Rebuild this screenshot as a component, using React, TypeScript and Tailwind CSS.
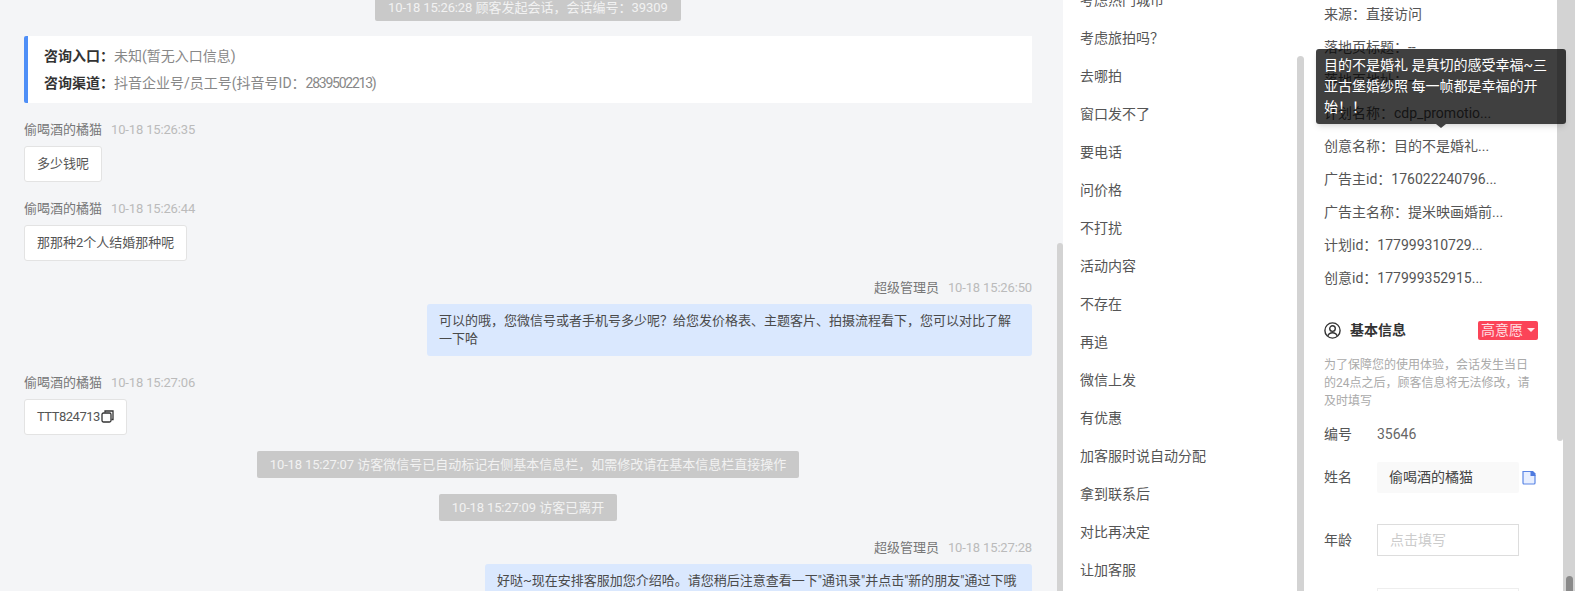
const consultList = [
  "考虑热门城市",
  "考虑旅拍吗？",
  "去哪拍",
  "窗口发不了",
  "要电话",
  "问价格",
  "不打扰",
  "活动内容",
  "不存在",
  "再追",
  "微信上发",
  "有优惠",
  "加客服时说自动分配",
  "拿到联系后",
  "对比再决定",
  "让加客服",
]

const adRows = [
  "来源：直接访问",
  "落地页标题：--",
  "落地页地址：--",
  "计划名称：cdp_promotio...",
  "创意名称：目的不是婚礼...",
  "广告主id：176022240796...",
  "广告主名称：提米映画婚前...",
  "计划id：177999310729...",
  "创意id：177999352915...",
]

const SystemNote = ({ time, text, className }: { time: string; text: string; className: string }) => (
  <div className={`flex justify-center ${className}`}>
    <div className="h-[27px] rounded-[2px] bg-[#c9c9c9] px-[13px] text-[13px] leading-[27px] text-[#f2f2f2]">
      <span className="tracking-[-0.15px]">{time}</span> {text}
    </div>
  </div>
)

const MetaLine = ({ name, time, right }: { name: string; time: string; right?: boolean }) => (
  <div className={`flex h-5 items-center gap-[9px] text-[13px] leading-5 ${right ? "justify-end" : ""}`}>
    <span className="text-[#777777]">{name}</span>
    <span className="tracking-[-0.15px] text-[#bbbbbb]">{time}</span>
  </div>
)

const GuestMessage = ({ name, time, children }: { name: string; time: string; children: React.ReactNode }) => (
  <div className="mt-[17px]">
    <MetaLine name={name} time={time} />
    <div className="mt-1.5 flex">
      <div className="flex h-9 items-center rounded-[3px] border border-[#e3e3e3] bg-white px-3 text-[13px] text-[#555555]">{children}</div>
    </div>
  </div>
)

const CopyIcon = () => (
  <svg width="13" height="13" viewBox="0 0 13 13" fill="none" stroke="#333333" strokeWidth="1.3" className="-mt-0.5 ml-px">
    <path d="M4 2.500V1h8v8.500h-1.500" />
    <rect x="1" y="3" width="9" height="9" rx="1.500" />
  </svg>
)

const FileCopyIcon = () => (
  <svg width="14" height="15" viewBox="0 0 14 15" className="shrink-0">
    <path d="M1 1.500h8l4 4v7.500a1 1 0 0 1-1 1H2a1 1 0 0 1-1-1z" fill="#e8efff" stroke="#5b86e5" strokeWidth="1.200" />
    <path d="M8.500 1h2.500l2.500 2.500v2.500h-5z" fill="#4f7be0" />
  </svg>
)

const ChatPanel = () => (
  <div className="w-[1057px] shrink-0 pl-6 pr-[25px]">
    <div className="-mt-1.5">
      <SystemNote time="10-18 15:26:28" text="顾客发起会话，会话编号：39309" className="" />
    </div>
    <div className="mt-[15px] flex h-[67px] flex-col justify-center rounded-l-[2px] border-l-4 border-[#4f8ff7] bg-white pl-4 text-[14px] leading-[27px]">
      <div>
        <span className="font-bold text-[#333333]">咨询入口：</span>
        <span className="text-[#888888]">未知(暂无入口信息)</span>
      </div>
      <div>
        <span className="font-bold text-[#333333]">咨询渠道：</span>
        <span className="text-[#888888]">
          抖音企业号/员工号(抖音号ID：<span className="tracking-[-1.25px]">2839502213</span>)
        </span>
      </div>
    </div>

    <GuestMessage name="偷喝酒的橘猫" time="10-18 15:26:35">多少钱呢</GuestMessage>
    <GuestMessage name="偷喝酒的橘猫" time="10-18 15:26:44">那那种2个人结婚那种呢</GuestMessage>

    <div className="mt-[17px]">
      <MetaLine name="超级管理员" time="10-18 15:26:50" right />
      <div className="mt-1.5 flex justify-end">
        <div className="w-[605px] rounded-[3px] bg-[#dae8fe] px-3 py-2 text-[13px] leading-[18px] text-[#4a4a4a]">
          可以的哦，您微信号或者手机号多少呢？给您发价格表、主题客片、拍摄流程看下，您可以对比了解一下哈
        </div>
      </div>
    </div>

    <GuestMessage name="偷喝酒的橘猫" time="10-18 15:27:06">
      <span className="tracking-[-0.5px]">TTT824713</span>
      <CopyIcon />
    </GuestMessage>

    <SystemNote time="10-18 15:27:07" text="访客微信号已自动标记右侧基本信息栏，如需修改请在基本信息栏直接操作" className="mt-4" />
    <SystemNote time="10-18 15:27:09" text="访客已离开" className="mt-4" />

    <div className="mt-[17px]">
      <MetaLine name="超级管理员" time="10-18 15:27:28" right />
      <div className="mt-1.5 flex justify-end">
        <div className="w-[547px] rounded-[3px] bg-[#dae8fe] px-3 py-2 text-[13px] leading-[18px] text-[#4a4a4a]">
          好哒~现在安排客服加您介绍哈。请您稍后注意查看一下"通讯录"并点击"新的朋友"通过下哦
        </div>
      </div>
    </div>
  </div>
)

const QuickReplies = () => (
  <div className="flex w-[241px] shrink-0">
    <div className="-mt-[19px] flex-1 pl-[17px] text-[14px] text-[#555555]">
      {consultList.map((item) => (
        <div key={item} className="flex h-[38px] items-center">{item}</div>
      ))}
    </div>
    <div className="mt-14 w-[7px] rounded-t-[4px] bg-[#d3d3d3]" />
  </div>
)

const ProfilePanel = () => (
  <div className="relative flex min-w-0 flex-1">
    <div className="w-[253px] shrink-0 pl-5 pr-[18px] text-[14px] text-[#555555]">
      <div className="-mt-0.5">
        {adRows.map((row) => (
          <div key={row} className="flex h-[33px] items-center whitespace-nowrap">{row}</div>
        ))}
      </div>

      <div className="mt-[25px] flex h-5 items-center">
        <svg width="17" height="17" viewBox="0 0 17 17" fill="none" stroke="#333333" strokeWidth="1.400">
          <circle cx="8.500" cy="8.500" r="7.600" />
          <circle cx="8.500" cy="6.600" r="2.800" />
          <path d="M3.800 14c.8-2.200 2.600-3.200 4.700-3.200s3.900 1 4.700 3.200" />
        </svg>
        <span className="ml-[9px] font-bold text-[#333333]">基本信息</span>
        <div className="ml-auto mr-px flex h-[19px] w-[60px] items-center justify-center gap-1 rounded-[2px] bg-[#fb4458] text-[#ffdfe2]">
          高意愿
          <span className="h-0 w-0 border-x-[4px] border-t-[4px] border-x-transparent border-t-[#ffe9eb]" />
        </div>
      </div>

      <p className="mt-4 w-[214px] text-[12px] leading-[18px] text-[#aaaaaa]">
        为了保障您的使用体验，会话发生当日的24点之后，顾客信息将无法修改，请及时填写
      </p>

      <div className="mt-[14px] flex h-5 items-center">
        <span className="w-[53px]">编号</span>
        <span className="text-[#666666]">35646</span>
      </div>

      <div className="mt-[18px] flex h-[31px] items-center">
        <span className="w-[53px] shrink-0">姓名</span>
        <div className="flex h-[31px] w-[142px] shrink-0 items-center rounded-[2px] bg-[#f9f9f9] px-3 text-[#444444]">偷喝酒的橘猫</div>
        <div className="ml-[3px]"><FileCopyIcon /></div>
      </div>

      <div className="mt-[31px] flex h-8 items-center">
        <span className="w-[53px] shrink-0">年龄</span>
        <div className="flex h-8 w-[142px] shrink-0 items-center border border-[#dddddd] px-3 text-[#cccccc]">点击填写</div>
      </div>

      <div className="mt-8 ml-[53px] h-8 w-[142px] border border-[#eeeeee]" />
    </div>
    <div className="h-[441px] w-1.5 shrink-0 rounded-b-[3px] bg-[#d3d3d3]" />
    <div className="flex flex-1 justify-center bg-[#d3d3d3]">
      <div className="mt-[576px] h-[15px] w-[7px] rounded-t-[4px] bg-[#8a8a8a]" />
    </div>

    {/* tooltip over the ad rows */}
    <div className="absolute left-3 top-[49px] w-[250px] rounded-[3px] bg-black/75 px-2 py-1.5 text-[14px] leading-[21px] text-white shadow-md">
      目的不是婚礼 是真切的感受幸福~三亚古堡婚纱照 每一帧都是幸福的开始！！
      <span className="absolute left-[120px] top-full h-0 w-0 border-x-[5px] border-t-[4px] border-x-transparent border-t-[#404040]" />
    </div>
  </div>
)

export default function App() {
  return (
    <div className="flex h-[591px] overflow-hidden bg-white font-['Roboto','Noto_Sans_CJK_SC',sans-serif]">
      <div className="flex shrink-0 bg-[#f4f5f7]">
        <ChatPanel />
        <div className="mt-[243px] w-1.5 rounded-t-[3px] bg-[#d3d3d3]" />
      </div>
      <QuickReplies />
      <ProfilePanel />
    </div>
  )
}
